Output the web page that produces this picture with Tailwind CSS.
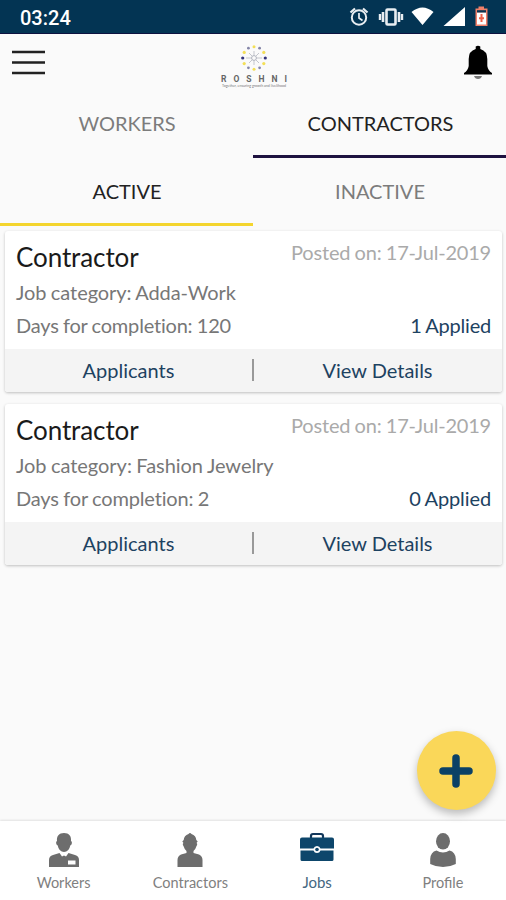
<!DOCTYPE html>
<html lang="en">
<head>
<meta charset="utf-8">
<meta name="viewport" content="width=device-width, initial-scale=1">
<title>Jobs</title>
<script src="https://cdn.jsdelivr.net/npm/@tailwindcss/browser@4"></script>
</head>
<body class="relative flex h-[900px] w-[506px] flex-col overflow-hidden bg-[#fafafa] font-['Lato',sans-serif] text-black">

<!-- Status bar -->
<div class="flex h-[34px] shrink-0 items-center justify-between border-b border-[#0d1240] bg-[#033453] pl-5 pr-[16px] text-white">
  <span class="pt-[3px] font-['Roboto',sans-serif] text-[20px] leading-none font-medium">03:24</span>
  <svg class="mt-[1px] h-[24px] w-[142px]" viewBox="348 6 142 24">
    <g fill="none" stroke="#e9eef2" stroke-width="2">
      <circle cx="359" cy="18.500" r="7.200"/>
      <path d="M359 14v5l3.500 2.500" stroke-width="1.700"/>
      <path d="M350.500 13.500l4.500-4M367.500 13.500l-4.500-4" stroke-width="2.200"/>
      <rect x="386.500" y="10.500" width="9" height="15" rx="1" stroke-width="2.600"/>
      <path d="M383 13v10M399 13v10" stroke-width="2.600"/>
      <path d="M380 15v6M402 15v6" stroke-width="2.400"/>
    </g>
    <path fill="#fff" d="M411.500 13Q422.500 4 433.500 13L422.500 26ZM443.500 27L465 8V27Z"/>
    <path fill="#f0806a" d="M475.500 9.500h3V7.500h5.500v2h3.500v17.500h-12Z"/>
    <path fill="#073553" d="M477 11.200h9v2.500h-9z"/>
    <path fill="#fff" d="M477 13.700h9v11.800h-9z"/>
    <path stroke="#f0624a" stroke-width="2" d="M481.500 15v8M479 19.200h5"/>
  </svg>
</div>

<!-- App bar -->
<header class="flex h-[56px] shrink-0 items-start justify-between pl-3 pr-[13px]">
  <svg class="mt-[15px] h-[28px] w-[34px]" viewBox="0 0 34 28">
    <path stroke="#222" stroke-width="2.400" d="M0 3h33M0 13.500h33M0 24h33"/>
  </svg>
  <div class="ml-[-1px] flex w-[68px] flex-col items-center pt-[11px]">
    <svg class="h-[26px] w-[26px]" viewBox="-13 -13 26 26">
      <path stroke="#c4c6cd" stroke-width="1" d="M-5-5L5 5M5-5L-5 5M-8 0h16M0-7v14"/>
      <circle r="2.400" fill="#fafafa" stroke="#a2a6b2" stroke-width=".8"/>
      <g fill="#f3df57"><circle cy="-11.300" r="1.500"/><circle cx="9.800" cy="-5.600" r="1.600"/><circle cx="9.800" cy="5.600" r="1.600"/><circle cy="11.300" r="1.500"/><circle cx="-9.800" cy="5.600" r="1.600"/><circle cx="-9.800" cy="-5.600" r="1.600"/></g>
      <g fill="#34357c"><circle cx="11.300" r="1.600"/><circle cx="-11.300" r="1.600"/></g>
      <g fill="#8586a8"><circle cx="5.600" cy="-9.800" r="1.400"/><circle cx="5.600" cy="9.800" r="1.400"/><circle cx="-5.600" cy="9.800" r="1.400"/><circle cx="-5.600" cy="-9.800" r="1.400"/></g>
    </svg>
    <div class="mt-[5px] flex w-[66px] justify-between font-['Roboto',sans-serif] text-[8.500px] leading-[7px] font-bold text-[#666]"><span>R</span><span>O</span><span>S</span><span>H</span><span>N</span><span>I</span></div>
    <div class="mt-[1px] text-[3.600px] leading-[3px] whitespace-nowrap text-[#777]">Together, ensuring growth and livelihood</div>
  </div>
  <svg class="mt-[10px] h-[37px] w-[30px]" viewBox="0 0 30 37">
    <path d="M12.700 5V2.500Q15 1 17.300 2.500V5Q24.300 7 24.300 15V22Q25 26.500 29 29V30.500H1V29Q5 26.500 5.700 22V15Q5.700 7 12.700 5Z"/>
    <path fill="#777" d="M11 32h8q-1 3-4 3T11 32Z"/>
  </svg>
</header>

<!-- Tabs -->
<nav class="grid h-[68px] shrink-0 grid-cols-2 text-center text-[20px] leading-[24px]">
  <div class="pt-[21px] pl-[1px] text-[#7c7c7c]">WORKERS</div>
  <div class="border-b-[3px] border-[#1e1240] pt-[21px] pl-[2px] text-[#222]">CONTRACTORS</div>
</nav>
<nav class="grid h-[68px] shrink-0 grid-cols-2 text-center text-[20px] leading-[24px]">
  <div class="border-b-[3px] border-[#f4d52e] pt-[21px] pl-[1px] text-[#222]">ACTIVE</div>
  <div class="pt-[21px] pl-[1px] text-[#7c7c7c]">INACTIVE</div>
</nav>

<!-- Job cards -->
<main class="flex flex-1 flex-col gap-3 pt-[5px] pr-[4px] pl-[5px]">
  <article class="h-[161px] overflow-hidden rounded-[3px] bg-white shadow-[0_1px_3px_rgba(0,0,0,0.24)]">
    <div class="flex h-[118px] flex-col px-[11px] pt-[8px] text-[20px] leading-[24px] text-[#777] [font-variant-ligatures:none] [word-spacing:-0.6px]">
      <div class="flex items-start justify-between"><h2 class="mt-[1px] text-[26px] leading-[34px] tracking-[-0.1px] text-[#1a1a1a]">Contractor</h2><span class="mt-[1px] tracking-[-0.2px] text-[#aaa]">Posted on: 17-Jul-2019</span></div>
      <div class="mt-[6px] tracking-[-0.07px]">Job category: Adda-Work</div>
      <div class="mt-[9px] flex justify-between"><span class="tracking-[-0.2px]">Days for completion: 120</span><span class="tracking-[-0.2px] text-[#1d4261]">1 Applied</span></div>
    </div>
    <div class="flex h-[43px] items-center bg-[#f4f4f4] pb-[2px] text-center text-[20px] leading-[24px] text-[#1d4261]"><span class="flex-1">Applicants</span><i class="mt-[1px] h-[22px] w-[2px] bg-[#999]"></i><span class="flex-1 pr-[1px]">View Details</span></div>
  </article>
  <article class="h-[161px] overflow-hidden rounded-[3px] bg-white shadow-[0_1px_3px_rgba(0,0,0,0.24)]">
    <div class="flex h-[118px] flex-col px-[11px] pt-[8px] text-[20px] leading-[24px] text-[#777] [font-variant-ligatures:none] [word-spacing:-0.6px]">
      <div class="flex items-start justify-between"><h2 class="mt-[1px] text-[26px] leading-[34px] tracking-[-0.1px] text-[#1a1a1a]">Contractor</h2><span class="mt-[1px] tracking-[-0.2px] text-[#aaa]">Posted on: 17-Jul-2019</span></div>
      <div class="mt-[6px] tracking-[-0.04px]">Job category: Fashion Jewelry</div>
      <div class="mt-[9px] flex justify-between"><span class="tracking-[-0.15px]">Days for completion: 2</span><span class="tracking-[-0.1px] text-[#1d4261]">0 Applied</span></div>
    </div>
    <div class="flex h-[43px] items-center bg-[#f4f4f4] pb-[2px] text-center text-[20px] leading-[24px] text-[#1d4261]"><span class="flex-1">Applicants</span><i class="mt-[1px] h-[22px] w-[2px] bg-[#999]"></i><span class="flex-1 pr-[1px]">View Details</span></div>
  </article>
</main>

<!-- Floating action button -->
<button class="absolute top-[731px] left-[417px] flex h-[79px] w-[79px] items-center justify-center rounded-full bg-[#fad759] pr-[1px] shadow-[0_4px_9px_rgba(0,0,0,0.26)]" aria-label="Add job">
  <svg class="h-[34px] w-[34px]" viewBox="0 0 34 34"><path d="M17 4v26M4 17h26" stroke="#0b4166" stroke-width="7.500" stroke-linecap="round"/></svg>
</button>

<!-- Bottom navigation -->
<footer class="grid h-[79px] shrink-0 grid-cols-4 bg-white pl-[1px] text-center text-[14.500px] leading-[18px] text-[#808080] shadow-[0_-1px_2px_rgba(0,0,0,0.1)]">
  <div class="flex flex-col items-center pt-[11px]">
    <svg class="h-[36px] w-[32px]" viewBox="0 0 32 36" fill="#6d6d6d">
      <path d="M16 1C21 1 23.500 4 23 9Q24.500 9.500 23.500 12.500L22.300 13.500Q21 20 16 20T9.700 13.500L8.500 12.500Q7.500 9.500 9 9C8.500 4 11 1 16 1Z"/>
      <path d="M1 35V28Q1 24 5 23L11.500 21L14 24.500L16 23.500L18 24.500L20.500 21L27 23Q31 24 31 28V35Z"/>
      <path fill="#fff" d="M20 28.500h7.500v4H20z"/>
    </svg>
    <span class="mt-[6px] mr-[1px]">Workers</span>
  </div>
  <div class="flex flex-col items-center pt-[11px]">
    <svg class="h-[36px] w-[32px]" viewBox="0 0 32 36" fill="#6d6d6d">
      <path d="M14.500 2Q16 0 17.500 2Q22 3.500 22.300 8L23.700 9.500L22.500 11Q24 12 22.300 14.500Q21.500 17.500 19.500 19V21L25 22.500Q28.500 24 28.500 28V35H3.500V28Q3.500 24 7 22.500L12.500 21V19Q10.500 17.500 9.700 14.500Q8 12 9.500 11L8.300 9.500L9.700 8Q10 3.500 14.500 2Z"/>
    </svg>
    <span class="mt-[6px]">Contractors</span>
  </div>
  <div class="flex flex-col items-center pt-[11px] text-[#456781]">
    <svg class="h-[36px] w-[34px]" viewBox="0 0 34 36">
      <path d="M11 6V4Q11 2 13 2H21Q23 2 23 4V6" fill="none" stroke="#12375b" stroke-width="2.200"/>
      <path fill="#0d466b" d="M2 5.500H32Q34 5.500 34 7.500V16.500H20.500A3.700 3.700 0 0 0 13.500 16.500H0V7.500Q0 5.500 2 5.500ZM.5 18.500H13.500A3.700 3.700 0 0 0 20.500 18.500H33.500V27.500Q33.500 29 32 29H2Q.5 29 .5 27.500Z"/>
      <circle cx="17" cy="17.500" r="1.800" fill="#0d466b"/>
    </svg>
    <span class="mt-[5px] pl-[1px] text-[15px]">Jobs</span>
  </div>
  <div class="flex flex-col items-center pt-[11px]">
    <svg class="h-[36px] w-[32px]" viewBox="0 0 32 36" fill="#6d6d6d">
      <ellipse cx="16" cy="9.300" rx="7" ry="8.300"/>
      <path d="M9.500 18.500Q16 22.500 22.500 18.500Q28.500 20 28.800 27V32Q23 35 16 35T3.200 32V27Q3.500 20 9.500 18.500Z"/>
    </svg>
    <span class="mt-[6px]">Profile</span>
  </div>
</footer>
</body>
</html>
